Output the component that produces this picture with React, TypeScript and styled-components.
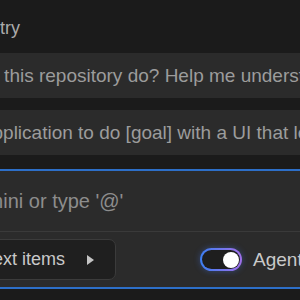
import styled, { createGlobalStyle } from "styled-components";

const GlobalStyle = createGlobalStyle`
  html, body {
    margin: 0;
    padding: 0;
    background: #1b1b1b;
  }
  body {
    font-family: "Liberation Sans", Arial, sans-serif;
  }
`;

const Page = styled.div`
  width: 300px;
  height: 300px;
  overflow: hidden;
  background: #1b1b1b;
`;

const Panel = styled.div`
  margin-left: -100px;
  width: 560px;
  padding-top: 17px;
  display: flex;
  flex-direction: column;
`;

const SectionTitle = styled.div`
  padding-left: 8px;
  font-size: 18px;
  line-height: 22px;
  color: #ababab;
  white-space: nowrap;
`;

const PromptList = styled.div`
  margin-top: 14px;
  display: flex;
  flex-direction: column;
  gap: 12px;
`;

const PromptChip = styled.div`
  height: 45px;
  display: flex;
  align-items: center;
  padding-left: 8px;
  background: #2b2b2b;
  color: #9c9c9c;
  font-size: 19px;
  white-space: nowrap;
  overflow: hidden;
`;

const Composer = styled.div`
  margin-top: 14px;
  border: 2px solid #2d6fc8;
  border-radius: 8px;
  background: #2b2b2b;
`;

const InputRow = styled.div`
  height: 61px;
  display: flex;
  align-items: center;
  padding-left: 19px;
  box-sizing: border-box;
  font-size: 20px;
  color: #8d8d8d;
  white-space: nowrap;
  border-bottom: 1px solid #3a3a3a;
`;

const Toolbar = styled.div`
  height: 55px;
  display: flex;
  align-items: center;
  padding-left: 40px;
  box-sizing: border-box;
`;

const ContextButton = styled.button`
  height: 41px;
  display: flex;
  align-items: center;
  padding: 0 21px 0 12px;
  background: #1f1f1f;
  border: 1px solid #3b3b3b;
  border-radius: 7px;
  color: #c9c9c9;
  font-family: inherit;
  font-size: 18px;
  white-space: nowrap;
`;

const Caret = styled.span`
  margin-left: 22px;
  width: 0;
  height: 0;
  border-top: 5px solid transparent;
  border-bottom: 5px solid transparent;
  border-left: 7px solid #c4c4c4;
`;

const ModeGroup = styled.div`
  margin-left: 84px;
  display: flex;
  align-items: center;
  gap: 11px;
`;

const Toggle = styled.div<{ $on: boolean }>`
  width: 42px;
  height: 23px;
  box-sizing: border-box;
  border-radius: 12px;
  border: 2px solid transparent;
  background: linear-gradient(#1e1e1e, #1e1e1e) padding-box,
    linear-gradient(90deg, #3c7ef2, #a070ea) border-box;
  box-shadow: 0 0 6px rgba(70, 120, 240, 0.4);
  display: flex;
  align-items: center;
  justify-content: ${(p) => (p.$on ? "flex-end" : "flex-start")};
  padding: 0 1px;
`;

const Knob = styled.div`
  width: 16px;
  height: 16px;
  border-radius: 50%;
  background: #ffffff;
`;

const ModeLabel = styled.span`
  font-size: 19px;
  color: #c9c9c9;
  white-space: nowrap;
`;

const prompts = [
  "What does this repository do? Help me understand the architecture.",
  "Build an application to do [goal] with a UI that looks like [description].",
];

export default function App() {
  return (
    <>
      <GlobalStyle />
      <Page>
        <Panel>
          <SectionTitle>Prompts to try</SectionTitle>
          <PromptList>
            {prompts.map((p) => (
              <PromptChip key={p}>{p}</PromptChip>
            ))}
          </PromptList>
          <Composer>
            <InputRow>Ask Gemini or type '@'</InputRow>
            <Toolbar>
              <ContextButton>
                Context items
                <Caret />
              </ContextButton>
              <ModeGroup>
                <Toggle $on>
                  <Knob />
                </Toggle>
                <ModeLabel>Agent</ModeLabel>
              </ModeGroup>
            </Toolbar>
          </Composer>
        </Panel>
      </Page>
    </>
  );
}
